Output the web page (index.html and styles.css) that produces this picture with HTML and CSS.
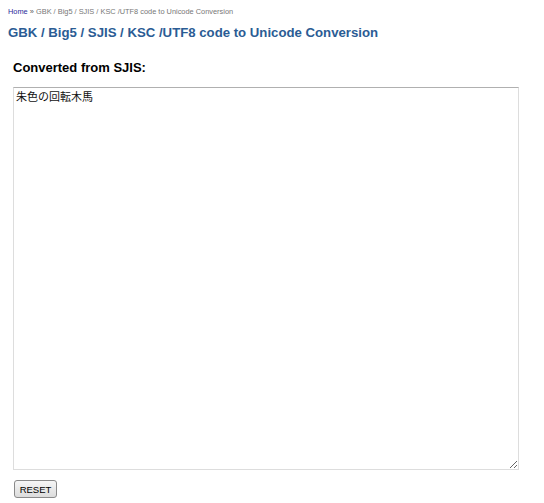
FILE: index.html
```html
<!DOCTYPE html>
<html>
<head>
<meta charset="utf-8">
<link rel="stylesheet" href="styles.css">
</head>
<body>
<div class="crumbs"><a class="home" href="#">Home</a> <span class="sep">»</span> GBK / Big5 / SJIS / KSC /UTF8 code to Unicode Conversion</div>
<h1 class="title">GBK / Big5 / SJIS / KSC /UTF8 code to Unicode Conversion</h1>
<div class="panel">
<h2 class="label">Converted from SJIS:</h2>
<textarea class="output">朱色の回転木馬</textarea>
<button class="reset">RESET</button>
</div>
</body>
</html>
```
FILE: styles.css
```css
html, body {
  margin: 0;
  padding: 0;
  background: #fff;
}
body {
  padding: 7px 8px 0 8px;
  font-family: "Liberation Sans", Arial, sans-serif;
}
.crumbs {
  font-size: 7.4px;
  color: #777;
  line-height: 10px;
}
.home {
  color: #2a2a9a;
  text-decoration: none;
}
.sep {
  color: #555;
}
.title {
  margin: 7px 0 0 0;
  font-size: 13.2px;
  line-height: 17px;
  font-weight: bold;
  color: #2b5c94;
}
.panel {
  padding: 0 0 0 5px;
  display: flex;
  flex-direction: column;
  align-items: flex-start;
}
.label {
  margin: 19px 0 0 0;
  font-size: 13px;
  line-height: 16px;
  font-weight: bold;
  color: #000;
}
.output {
  margin-top: 11px;
  box-sizing: border-box;
  width: 506px;
  height: 383px;
  border: 1px solid #ddd;
  border-top-color: #b0b0b0;
  padding: 2px 2px;
  font-family: "Noto Sans CJK JP", sans-serif;
  font-size: 11px;
  line-height: 13px;
  color: #111;
  resize: both;
  outline: none;
}
.reset {
  margin: 10px 0 0 1px;
  box-sizing: border-box;
  width: 43px;
  height: 18px;
  padding: 0;
  font-family: "Liberation Sans", Tahoma, sans-serif;
  font-size: 9.5px;
  color: #000;
  border: 1px solid #8a8a8a;
  border-radius: 3px;
  background: linear-gradient(#f6f6f6, #dcdcdc);
}
```
